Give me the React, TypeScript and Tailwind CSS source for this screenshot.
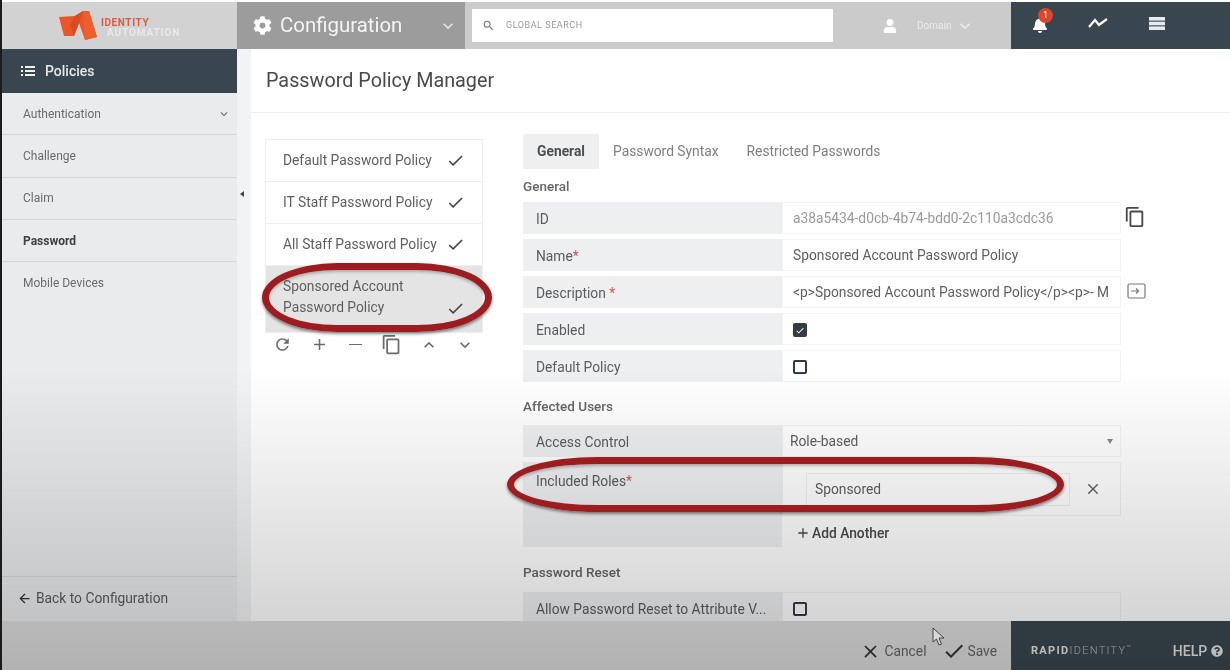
import React from 'react';
import { FaCog, FaBell, FaUser, FaQuestionCircle } from 'react-icons/fa';
import {
  MdAdd,
  MdArrowBack,
  MdCheck,
  MdClose,
  MdContentCopy,
  MdExpandLess,
  MdExpandMore,
  MdRefresh,
  MdSearch,
} from 'react-icons/md';

const sideItems = ['Authentication', 'Challenge', 'Claim', 'Password', 'Mobile Devices'];
const policies = ['Default Password Policy', 'IT Staff Password Policy', 'All Staff Password Policy'];

const Row: React.FC<{ label: React.ReactNode; children?: React.ReactNode }> = ({ label, children }) => (
  <div className="flex h-[32px] mb-[5px]">
    <div className="w-[259px] bg-[#edeff1] pl-[13px] pt-[2px] flex items-center text-[13.8px] text-[#5c5c5c] shrink-0 whitespace-nowrap">{label}</div>
    <div className="w-[339px] border border-[#f3f3f3] flex items-center pl-[10px] text-[13.8px] text-[#5f5f5f] whitespace-nowrap overflow-hidden">
      {children}
    </div>
  </div>
);

const Req = () => <span className="text-[#d9534f]">*</span>;

const Box: React.FC<{ checked?: boolean }> = ({ checked }) => (
  <span className={`mt-[2px] w-[14px] h-[14px] rounded-[2px] border-2 border-[#343b42] flex items-center justify-center ${checked ? 'bg-[#343b42]' : 'bg-white'}`}>
    {checked && <MdCheck className="text-white" size={13} />}
  </span>
);

export default function App() {
  return (
    <div className="relative w-[1230px] h-[670px] overflow-hidden bg-white flex flex-col pl-[2px] pt-[2px] font-['Roboto',sans-serif] blur-[0.7px]">
      {/* top bar */}
      <header className="h-[47px] flex shrink-0">
        <div className="w-[235px] bg-[#d2d2d2] flex items-center pl-[57px] gap-[4px]">
          <svg width="38" height="30" viewBox="0 0 38 30">
            <path d="M0 6 L16 5 L24 0 L30 0 L38 26 L26 29 L20 12 L15 25 L5 25 Z" fill="#e9562a" />
            <path d="M24 0 L30 0 L38 26 L26 29 Z" fill="#ee5f2e" />
            <path d="M16 5 L24 0 L20 12 L15 25 L11 14 Z" fill="#d94b22" />
          </svg>
          <div className="text-[10px] leading-[10px] font-bold tracking-[0.6px] mt-[5px]">
            <div className="text-[#dc5b44]">IDENTITY</div>
            <div className="text-[#e9e9e9] ml-[6px] tracking-[0.9px]">AUTOMATION</div>
          </div>
        </div>
        <div className="w-[228px] bg-[#9c9c9c] flex items-center pl-[16px] text-white">
          <FaCog size={19} />
          <span className="ml-[8px] text-[20.4px] text-[#f4f4f4]">Configuration</span>
          <MdExpandMore size={20} className="ml-[36px] text-[#e6e6e6]" />
        </div>
        <div className="w-[546px] bg-[#cbcbcb] flex items-center pl-[7px]">
          <div className="w-[361px] h-[33px] bg-white flex items-center pl-[10px] gap-[11px] text-[#9a9a9a]">
            <MdSearch size={13} className="text-[#777777]" />
            <span className="text-[9px] tracking-[0.55px]">GLOBAL SEARCH</span>
          </div>
          <FaUser size={14} className="ml-[50px] text-white" />
          <span className="ml-[20px] text-[10px] text-[#ececec]">Domain</span>
          <MdExpandMore size={20} className="ml-[4px] text-[#ececec]" />
        </div>
        <div className="flex-1 bg-[#3a464f] flex items-center text-white">
          <div className="relative ml-[21px] -mt-[2px]">
            <FaBell size={16} />
            <span className="absolute -top-[9px] left-[6px] w-[15px] h-[15px] rounded-full bg-[#d6472e] text-[9px] leading-[15px] text-center">1</span>
          </div>
          <svg className="ml-[40px] -mt-[6px]" width="20" height="12" viewBox="0 0 20 12" fill="none" stroke="#fff" strokeWidth="2.2">
            <path d="M1 10 L7 3 L11 8 L19 2" />
          </svg>
          <svg className="ml-[41px] -mt-[4px]" width="16" height="13" viewBox="0 0 16 13" fill="#e8eaeb">
            <rect width="16" height="3.6" />
            <rect y="4.7" width="16" height="3.6" />
            <rect y="9.4" width="16" height="3.6" />
          </svg>
        </div>
      </header>

      <div className="flex flex-1 min-h-0">
        {/* sidebar */}
        <aside className="w-[235px] bg-[#e9ebed] flex flex-col shrink-0">
          <div className="h-[44px] bg-[#3a464f] flex items-center pl-[19px] text-[#e4e7e9] text-[14px] font-medium">
            <svg width="14" height="10" viewBox="0 0 14 10" fill="#eef0f1" className="mr-[10px]">
              <rect width="2" height="2" />
              <rect x="4" width="10" height="2" />
              <rect y="4" width="2" height="2" />
              <rect x="4" y="4" width="10" height="2" />
              <rect y="8" width="2" height="2" />
              <rect x="4" y="8" width="10" height="2" />
            </svg>
            Policies
          </div>
          {sideItems.map((item) => (
            <div
              key={item}
              className={`h-[42.3px] flex items-center justify-between pl-[21px] pr-[6px] border-b border-[#d5d8db] text-[12px] ${item === 'Password' ? 'font-bold text-[#3f3f3f]' : 'text-[#6b6b6b]'} ${item === 'Mobile Devices' ? 'border-b-0' : ''}`}
            >
              {item}
              {item === 'Authentication' && <MdExpandMore size={14} />}
            </div>
          ))}
          <div className="mt-auto h-[45px] border-t border-[#d5d8db] flex items-center pl-[15px] pb-[1px] text-[13.8px] text-[#5a5a5a]">
            <MdArrowBack size={15} className="mr-[4px] text-[#333333]" />
            Back to Configuration
          </div>
        </aside>

        {/* collapse strip */}
        <div className="w-[14px] bg-[#f1f3f4] flex items-center shrink-0">
          <span className="ml-[3px] mt-[-283px] w-0 h-0 border-y-[3px] border-y-transparent border-r-[4px] border-r-[#444444]" />
        </div>

        {/* main */}
        <main className="flex-1 min-w-0 overflow-hidden flex flex-col">
          <div className="h-[64px] border-b border-[#eeeeee] flex items-center pl-[15px] text-[19.8px] text-[#4a4a4a] shrink-0">
            Password Policy Manager
          </div>
          <div className="flex flex-1 min-h-0 pt-[21px]">
            {/* policy list */}
            <div className="w-[218px] ml-[14px] mt-[5px] shrink-0">
              <div className="border border-[#eeeeee]">
                {policies.map((p) => (
                  <div key={p} className="h-[42px] border-b border-[#eeeeee] flex items-center justify-between pl-[17px] pr-[17px] text-[13.8px] text-[#5f5f5f] whitespace-nowrap">
                    {p}
                    <MdCheck size={19} className="text-[#444444] shrink-0" />
                  </div>
                ))}
                <div className="h-[66px] bg-[#e4e4e4] flex justify-between pl-[17px] pr-[17px] pt-[10px] text-[13.8px] leading-[21px] text-[#5f5f5f]">
                  <span className="w-[140px]">Sponsored Account Password Policy</span>
                  <MdCheck size={19} className="text-[#444444] self-end mb-[14px]" />
                </div>
              </div>
              <div className="flex items-center text-[#6b6b6b] pl-[8px] pt-[1px]">
                <MdRefresh size={19} />
                <MdAdd size={19} className="ml-[18px]" />
                <span className="w-[13px] h-[1.5px] bg-[#6b6b6b] ml-[20px]" />
                <MdContentCopy size={21} className="ml-[19px]" />
                <MdExpandLess size={20} className="ml-[17px]" />
                <MdExpandMore size={20} className="ml-[16px]" />
              </div>
            </div>

            {/* form */}
            <div className="ml-[40px] w-[640px] relative">
              <div className="flex items-center h-[35px] text-[13.8px] text-[#7f7f7f]">
                <span className="h-full w-[76px] bg-[#eeeff0] flex items-center justify-center font-bold text-[#4e4e4e]">General</span>
                <span className="ml-[14px]">Password Syntax</span>
                <span className="ml-[28px]">Restricted Passwords</span>
              </div>
              <div className="mt-[9px] mb-[8px] text-[13.5px] font-medium text-[#666666] leading-[16px]">General</div>

              <Row label="ID">
                <span className="text-[#9a9a9a]">a38a5434-d0cb-4b74-bdd0-2c110a3cdc36</span>
              </Row>
              <Row label={<>Name<Req /></>}>Sponsored Account Password Policy</Row>
              <Row label={<>Description&nbsp;<Req /></>}>{'<p>Sponsored Account Password Policy</p><p>- M'}</Row>
              <Row label="Enabled"><Box checked /></Row>
              <Row label="Default Policy"><Box /></Row>

              <MdContentCopy size={22} className="absolute left-[601px] top-[72px] text-[#4a4a4a]" />
              <svg className="absolute left-[604px] top-[149px]" width="19" height="16" viewBox="0 0 19 16" fill="none" stroke="#777777" strokeWidth="1.2">
                <rect x="1" y="1" width="17" height="14" rx="1.5" />
                <path d="M4 8 H11 M9 5.5 L11.5 8 L9 10.5" />
              </svg>

              <div className="mt-[16px] mb-[11px] text-[13.5px] font-medium text-[#666666] leading-[16px]">Affected Users</div>
              <Row label="Access Control">
                <span className="-ml-[3px] flex-1">Role-based</span>
                <span className="mr-[7px] w-0 h-0 border-x-[3px] border-x-transparent border-t-[5px] border-t-[#888888]" />
              </Row>
              <div className="flex h-[85px]">
                <div className="w-[259px] bg-[#edeff1] pl-[13px] pt-[9px] text-[13.8px] text-[#5c5c5c] shrink-0">Included Roles<Req /></div>
                <div className="w-[339px]">
                  <div className="h-[54px] border border-[#f0f0f0] flex items-center pl-[23px]">
                    <div className="w-[264px] h-[33px] border border-[#eeeeee] flex items-center pl-[8px] text-[13.8px] text-[#5f5f5f]">Sponsored</div>
                    <MdClose size={18} className="ml-[14px] text-[#666666]" />
                  </div>
                  <div className="flex items-center pl-[13px] mt-[7px] text-[13.8px] font-medium text-[#4a4a4a]">
                    <MdAdd size={16} className="mr-[1px]" />
                    Add Another
                  </div>
                </div>
              </div>

              <div className="mt-[17px] mb-[12px] text-[13.5px] font-medium text-[#666666] leading-[16px]">Password Reset</div>
              <Row label="Allow Password Reset to Attribute V..."><Box /></Row>
            </div>
          </div>
        </main>
      </div>

      {/* footer */}
      <footer className="h-[49px] flex shrink-0 bg-[#dedede] relative -ml-[2px]">
        <div className="flex-1 flex items-center justify-end pr-[14px] pt-[11px] text-[13.8px] text-[#666666]">
          <MdClose size={21} className="text-[#333333] mr-[3px]" />
          <span>Cancel</span>
          <MdCheck size={24} className="text-[#333333] ml-[16px] mr-[1px]" />
          <span>Save</span>
        </div>
        <div className="w-[219px] bg-[#3a464f] flex items-center pl-[20px] pt-[11px] text-[#e6e6e6] shrink-0">
          <span className="text-[11px] font-bold tracking-[1.3px]">RAPID</span>
          <span className="text-[11px] font-light tracking-[1.3px] text-[#bcbcbc]">IDENTITY</span>
          <span className="text-[7px] -mt-[6px] text-[#bcbcbc]">™</span>
          <span className="ml-[42px] text-[14px] font-medium">HELP</span>
          <FaQuestionCircle size={12} className="ml-[4px]" />
        </div>
      </footer>

      {/* video fade over the lower half of the frame */}
      <div className="absolute inset-0 pointer-events-none bg-gradient-to-b from-transparent from-[55%] to-[#000000]/20" />

      {/* left black edge */}
      <div className="absolute left-0 top-0 bottom-0 w-[2px] bg-[#1b1b1b]" />

      {/* red annotations */}
      <div className="absolute left-[262px] top-[263px] w-[230px] h-[69px] rounded-[75px/50%] border-[7px] border-[#9d1c20] shadow-[0_2px_3px_rgba(0,0,0,0.45),inset_0_2px_3px_rgba(0,0,0,0.25)]" />
      <div className="absolute left-[507px] top-[457px] w-[557px] h-[55px] rounded-[90px/50%] border-[7px] border-[#9d1c20] shadow-[0_2px_3px_rgba(0,0,0,0.45),inset_0_2px_3px_rgba(0,0,0,0.25)]" />

      {/* mouse pointer */}
      <svg className="absolute left-[932px] top-[627px]" width="14" height="20" viewBox="0 0 14 20" fill="#d8d8d8" stroke="#444444" strokeWidth="1">
        <path d="M1 1 L1 15 L4.5 12 L7 18 L9.5 17 L7 11 L12 11 Z" />
      </svg>
    </div>
  );
}
